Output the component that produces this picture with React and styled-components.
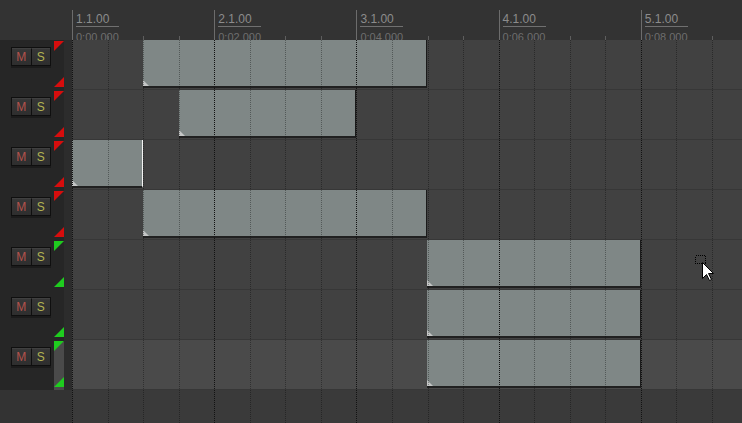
import React from "react";
import styled, { createGlobalStyle } from "styled-components";

const BEAT = 35.55;
const BEATS = 19;
const MEASURES = 5;

const tracks = [
  { tone: "red", top: true, items: [{ start: 2, end: 10 }] },
  { tone: "red", top: true, items: [{ start: 3, end: 8 }] },
  { tone: "red", top: true, items: [{ start: 0, end: 2, edge: "#f4f4f4" }] },
  { tone: "red", top: true, items: [{ start: 2, end: 10 }] },
  { tone: "green", top: true, items: [{ start: 10, end: 16 }] },
  { tone: "green", top: false, items: [{ start: 10, end: 16 }] },
  { tone: "green", top: true, selected: true, items: [{ start: 10, end: 16 }] },
];

const toneColors = { red: "#d70d0d", green: "#1fcc1f" };

const GlobalStyle = createGlobalStyle`
  html, body {
    margin: 0;
    padding: 0;
    background: #333333;
    overflow: hidden;
  }
  * {
    box-sizing: border-box;
  }
`;

const Window = styled.div`
  position: relative;
  display: flex;
  width: 742px;
  height: 423px;
  overflow: hidden;
  background: #333333;
  font-family: "Liberation Sans", Arial, sans-serif;
`;

const LeftColumn = styled.div`
  width: 72px;
  flex: none;
  display: flex;
  flex-direction: column;
`;

const Corner = styled.div`
  height: 40px;
  flex: none;
  background: #333333;
`;

const TrackHeader = styled.div`
  height: 50px;
  flex: none;
  display: flex;
  background: #262626;
`;

const Controls = styled.div`
  width: 54px;
  padding: 7px 0 0 11px;
`;

const ButtonPair = styled.div`
  display: flex;
  width: 40px;
  height: 19px;
  border: 1px solid #0f0f0f;
  box-shadow: 0 2px 0 #1b1b1b;
`;

const ToggleButton = styled.button`
  flex: 1;
  margin: 0;
  padding: 0;
  border: none;
  border-top: 1px solid #404040;
  background: linear-gradient(#363636, #2e2e2e);
  color: ${({ $tone }) => $tone};
  font-family: "Liberation Sans", Arial, sans-serif;
  font-size: 12px;
  line-height: 16px;
  text-align: center;

  & + & {
    border-left: 1px solid #0f0f0f;
  }
`;

const Strip = styled.div`
  width: 10px;
  display: flex;
  flex-direction: column;
  justify-content: space-between;
  padding: 1px 0 3px;
  background: ${({ $selected }) =>
    $selected ? "linear-gradient(transparent 2px, #4a4a4a 2px)" : "transparent"};
`;

const Flag = styled.div`
  width: 10px;
  height: 10px;
  background: ${({ $color }) => $color || "transparent"};
  clip-path: ${({ $bottom }) =>
    $bottom ? "polygon(100% 0, 100% 100%, 0 100%)" : "polygon(0 0, 100% 0, 0 100%)"};
`;

const Gutter = styled.div`
  width: 8px;
  background: #2c2c2c;
`;

const LeftFiller = styled.div`
  flex: 1;
  background: #333333;
`;

const RightColumn = styled.div`
  position: relative;
  flex: 1;
  display: flex;
  flex-direction: column;
  overflow: hidden;
`;

const Ruler = styled.div`
  height: 40px;
  flex: none;
  display: grid;
  grid-template-columns: repeat(${MEASURES}, ${BEAT * 4}px);
  overflow: hidden;
  background: #333333;
`;

const MeasureLabel = styled.div`
  padding: 12px 0 0 4px;
`;

const BarText = styled.div`
  font-size: 12px;
  line-height: 14px;
  color: #8c8c8c;
`;

const BarRule = styled.div`
  width: 43px;
  height: 1px;
  background: #707070;
`;

const TimeText = styled.div`
  margin-top: 4px;
  font-size: 11px;
  line-height: 12px;
  color: #6e6e6e;
`;

const Lane = styled.div`
  height: 50px;
  flex: none;
  display: grid;
  grid-template-columns: repeat(${BEATS}, ${BEAT}px);
  grid-template-rows: 48px;
  border-bottom: 1px solid #373737;
  background: ${({ $selected }) => ($selected ? "#4a4a4a" : "#414141")};
  overflow: hidden;
`;

const Item = styled.div`
  position: relative;
  grid-row: 1;
  background: #7f8786;
  border-bottom: 2px solid #202020;
  border-right: 1px solid ${({ $edge }) => $edge || "#1a1a1a"};

  &::after {
    content: "";
    position: absolute;
    left: 0;
    bottom: 0;
    border-left: 6px solid #c4c6c6;
    border-top: 6px solid transparent;
  }
`;

const RightFiller = styled.div`
  flex: 1;
  background: #3a3a3a;
`;

const GridOverlay = styled.svg`
  position: absolute;
  left: 0;
  top: 0;
  width: 670px;
  height: 423px;
  pointer-events: none;
`;

const Pointer = styled.svg`
  position: absolute;
  left: 695px;
  top: 255px;
  width: 22px;
  height: 30px;
  pointer-events: none;
`;

const pad = (n) => String(n).padStart(2, "0");

function Grid() {
  const lines = [];
  for (let k = 0; k < BEATS; k++) {
    const x = Math.round(k * BEAT) + 0.5;
    const measure = k % 4 === 0;
    lines.push(
      <g key={k}>
        {measure ? (
          <line x1={x} x2={x} y1={10} y2={40} stroke="#6c6c6c" />
        ) : (
          <line x1={x} x2={x} y1={36} y2={40} stroke="#5e5e5e" />
        )}
        <line
          x1={x}
          x2={x}
          y1={40}
          y2={423}
          stroke={measure ? "#121212" : "rgba(0,0,0,0.34)"}
          strokeDasharray="1 1"
        />
      </g>
    );
  }
  return (
    <GridOverlay viewBox="0 0 670 423" shapeRendering="crispEdges">
      {lines}
    </GridOverlay>
  );
}

function TrackControls({ track }) {
  const color = toneColors[track.tone];
  return (
    <TrackHeader>
      <Controls>
        <ButtonPair>
          <ToggleButton $tone="#b4524c">M</ToggleButton>
          <ToggleButton $tone="#b2b252">S</ToggleButton>
        </ButtonPair>
      </Controls>
      <Strip $selected={track.selected}>
        <Flag $color={track.top ? color : null} />
        <Flag $color={color} $bottom />
      </Strip>
      <Gutter />
    </TrackHeader>
  );
}

export default function App() {
  return (
    <>
      <GlobalStyle />
      <Window>
        <LeftColumn>
          <Corner />
          {tracks.map((t, i) => (
            <TrackControls key={i} track={t} />
          ))}
          <LeftFiller />
        </LeftColumn>
        <RightColumn>
          <Ruler>
            {Array.from({ length: MEASURES }, (_, m) => (
              <MeasureLabel key={m}>
                <BarText>{m + 1}.1.00</BarText>
                <BarRule />
                <TimeText>0:{pad(m * 2)}.000</TimeText>
              </MeasureLabel>
            ))}
          </Ruler>
          {tracks.map((t, i) => (
            <Lane key={i} $selected={t.selected}>
              {t.items.map((it, j) => (
                <Item
                  key={j}
                  $edge={it.edge}
                  style={{ gridColumn: `${it.start + 1} / ${it.end + 1}` }}
                />
              ))}
            </Lane>
          ))}
          <RightFiller />
          <Grid />
        </RightColumn>
        <Pointer viewBox="0 0 22 30">
          <rect x="0.5" y="0.5" width="10" height="8" fill="none" stroke="#000" strokeDasharray="1 1" shapeRendering="crispEdges" />
          <path
            d="M7.5 7.5 L7.5 23.5 L11.5 19.5 L14.5 25.5 L16.5 24.5 L13.5 18.5 L18.5 18.5 Z"
            fill="#fff"
            stroke="#000"
            strokeWidth="1"
            strokeLinejoin="miter"
          />
        </Pointer>
      </Window>
    </>
  );
}
